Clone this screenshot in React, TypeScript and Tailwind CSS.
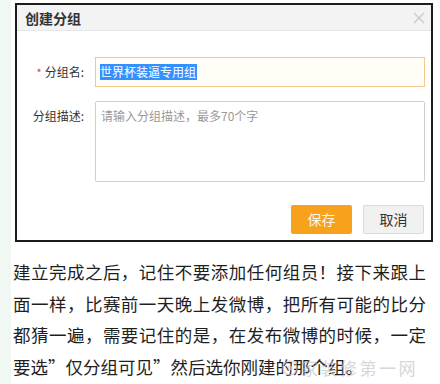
import React from 'react';

const cjk = { fontFamily: '"Noto Sans CJK SC", "Noto Sans", sans-serif' };

function CloseIcon() {
  return (
    <svg width="12" height="12" viewBox="0 0 12 12" className="text-[#c8c8c8]">
      <path d="M1 1 L11 11 M11 1 L1 11" stroke="currentColor" strokeWidth="1.2" fill="none" />
    </svg>
  );
}

function CreateGroupDialog() {
  return (
    <div className="ml-[4px] mt-[3px] w-[418px] h-[239px] border-2 border-[#1c1c1c] bg-white flex flex-col">
      {/* Header */}
      <div className="h-[26px] bg-[#f3f3f3] border-b border-[#e6e6e6] flex items-center justify-between pl-[8px] pr-[6px]">
        <span className="text-[14px] font-bold text-[#333] leading-none">创建分组</span>
        <CloseIcon />
      </div>

      {/* Body */}
      <div className="flex flex-col pt-[26px]">
        <div className="flex items-center h-[30px]">
          <div className="w-[78px] pr-[11px] text-right text-[12px] text-[#333] flex items-center justify-end">
            <span className="text-[#e4393c] text-[11px] mr-[3px]">*</span>
            <span>分组名:</span>
          </div>
          <div className="w-[330px] h-[30px] border border-[#f1c98d] bg-[#fffdf6] flex items-center pl-[4px]">
            <span className="bg-[#3390ff] text-white text-[12px] leading-[16px] pr-[1px]">世界杯装逼专用组</span>
          </div>
        </div>

        <div className="flex mt-[14px]">
          <div className="w-[78px] pr-[11px] text-right text-[12px] text-[#333] pt-[6px]">分组描述:</div>
          <div className="w-[330px] h-[81px] border border-[#cfcfcf] rounded-[2px] pl-[5px] pt-[5px] text-[12px] text-[#999]">
            请输入分组描述，最多70个字
          </div>
        </div>

        <div className="flex justify-end gap-[11px] mt-[23px] pr-[7px]">
          <button className="w-[61px] h-[29px] rounded-[2px] bg-[#f7a11c] text-[#fff6e8] text-[14px]">保存</button>
          <button className="w-[61px] h-[29px] rounded-[2px] bg-[#f1f1f1] border border-[#dadada] text-[#333] text-[14px]">取消</button>
        </div>
      </div>
    </div>
  );
}

export default function App() {
  const justified = 'text-justify [text-align-last:justify]';
  return (
    <div className="w-[440px] h-[384px] bg-white flex overflow-hidden" style={cjk}>
      <div className="w-[11px] h-full bg-[#f1f8f3]" />
      <div className="flex-1 flex flex-col">
        <CreateGroupDialog />

        <div className="relative mt-[14px] ml-[2px] w-[413px] text-[17.5px] leading-[31.5px] text-[#1f1f1f]">
          <div className={justified}>建立完成之后，记住不要添加任何组员！接下来跟上</div>
          <div className={justified}>面一样，比赛前一天晚上发微博，把所有可能的比分</div>
          <div className={justified}>都猜一遍，需要记住的是，在发布微博的时候，一定</div>
          <div>要选”仅分组可见”然后选你刚建的那个组。</div>

          {/* watermark */}
          <div className="absolute left-[268px] top-[96px] h-[31.5px] flex items-center gap-[2px] pointer-events-none opacity-60">
            <svg width="18" height="18" viewBox="0 0 18 18">
              <circle cx="9" cy="9" r="7" stroke="#c9c9c9" strokeWidth="1.5" fill="none" />
              <circle cx="9" cy="9" r="2.5" fill="#d4d4d4" />
            </svg>
            <span className="text-[17px] tracking-[2.5px] text-[#bdbdbd]">家装修第一网</span>
          </div>
        </div>
      </div>
    </div>
  );
}
